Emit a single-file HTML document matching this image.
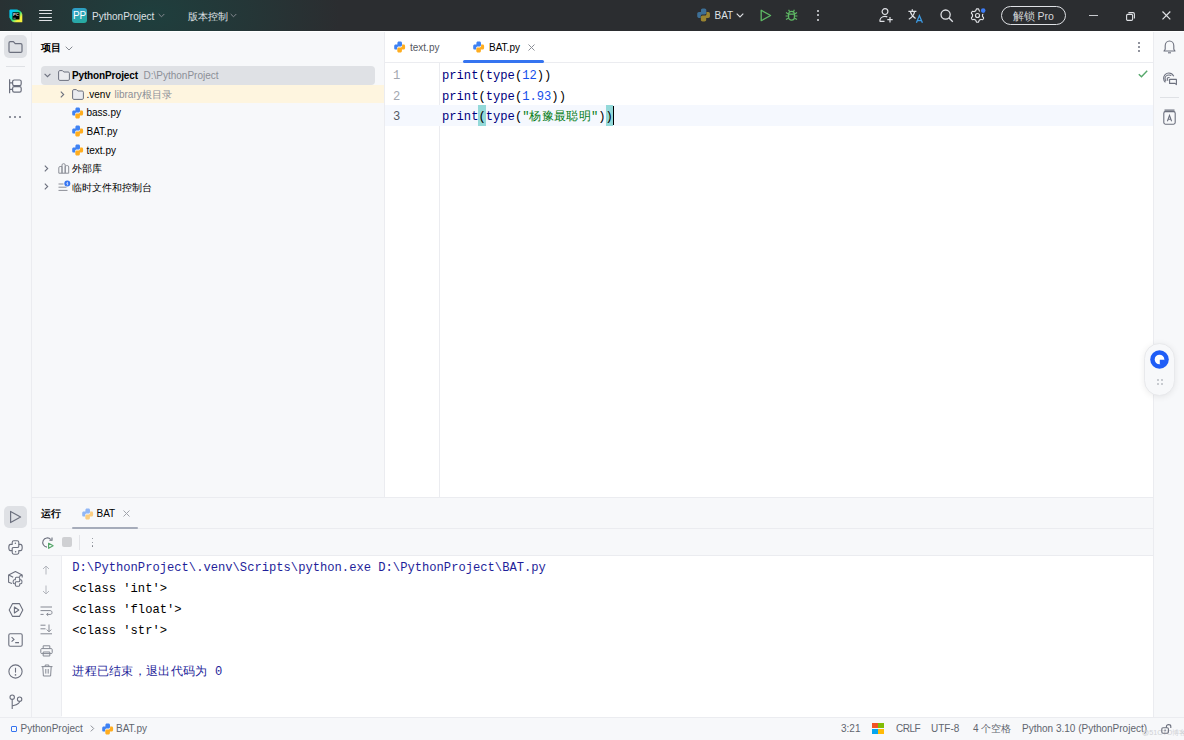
<!DOCTYPE html>
<html><head><meta charset="utf-8">
<style>
*{margin:0;padding:0;box-sizing:border-box}
html,body{width:1184px;height:740px;overflow:hidden;background:#f7f8fa;font-family:"Liberation Sans",sans-serif;color:#000}
.a{position:absolute}
.t{position:absolute;white-space:nowrap;font-size:10px;line-height:12px}
.m{font-family:"Liberation Mono",monospace;font-size:12.15px;line-height:14px;position:absolute;white-space:nowrap}
svg{position:absolute;overflow:visible}
#title{left:0;top:0;width:1184px;height:30.7px;background:#2b2d30}
#tgrad{left:0;top:0;width:600px;height:30.7px;background:radial-gradient(ellipse 190px 110px at 150px 15px,rgba(28,66,64,0.85),rgba(28,66,64,0.45) 50%,rgba(28,66,64,0) 100%)}
</style></head><body>
<svg width="0" height="0" style="position:absolute"><defs><g id="pyc"><path d="M4.9 0.4H6.5C7.4 0.4 8 1 8 1.9V4C8 4.9 7.4 5.5 6.5 5.5H4.6C3.8 5.5 3.2 6.1 3.2 6.9V8.5H1.6C0.7 8.5 0.2 7.8 0.2 6.9V5C0.2 4.1 0.8 3.5 1.7 3.5H3.4V1.9C3.4 1 4 0.4 4.9 0.4Z" fill="#3f82f3"/><path d="M4.9 0.4H6.5C7.4 0.4 8 1 8 1.9V4C8 4.9 7.4 5.5 6.5 5.5H4.6C3.8 5.5 3.2 6.1 3.2 6.9V8.5H1.6C0.7 8.5 0.2 7.8 0.2 6.9V5C0.2 4.1 0.8 3.5 1.7 3.5H3.4V1.9C3.4 1 4 0.4 4.9 0.4Z" fill="#ffad1f" transform="rotate(180 5.65 6)"/></g><g id="pym"><path d="M4.9 0.4H6.5C7.4 0.4 8 1 8 1.9V4C8 4.9 7.4 5.5 6.5 5.5H4.6C3.8 5.5 3.2 6.1 3.2 6.9V8.5H1.6C0.7 8.5 0.2 7.8 0.2 6.9V5C0.2 4.1 0.8 3.5 1.7 3.5H3.4V1.9C3.4 1 4 0.4 4.9 0.4Z" fill="#3d6f96"/><path d="M4.9 0.4H6.5C7.4 0.4 8 1 8 1.9V4C8 4.9 7.4 5.5 6.5 5.5H4.6C3.8 5.5 3.2 6.1 3.2 6.9V8.5H1.6C0.7 8.5 0.2 7.8 0.2 6.9V5C0.2 4.1 0.8 3.5 1.7 3.5H3.4V1.9C3.4 1 4 0.4 4.9 0.4Z" fill="#9a8430" transform="rotate(180 5.65 6)"/></g></defs></svg>
<!-- title bar -->
<div id="title" class="a"></div>
<div id="tgrad" class="a"></div>
<!-- logo -->
<svg style="left:8.5px;top:8.5px" width="14" height="14" viewBox="0 0 14 14"><defs><linearGradient id="lg" x1="0" y1="0" x2="1" y2="1"><stop offset="0.2" stop-color="#00c8f6"/><stop offset="0.5" stop-color="#14d98a"/><stop offset="0.75" stop-color="#f5f03c"/></linearGradient></defs><path d="M0.4 1.6Q0.4 0.4 1.6 0.4H8.2L10.8 1.8Q13 3 13.3 5.2V13.2H5Q2.8 13.1 1.8 10.8L0.4 8.4Z" fill="url(#lg)"/><rect x="3.5" y="3.3" width="7" height="7.2" fill="#000"/><text x="3.9" y="7.3" font-family="Liberation Sans" font-size="4.2" font-weight="bold" fill="#e8e8e8">PC</text><rect x="4.3" y="8.8" width="2.4" height="0.7" fill="#bbb"/></svg>
<!-- hamburger -->
<div class="a" style="left:39px;top:9.5px;width:13px;height:1.3px;background:#dfe1e5;border-radius:1px"></div>
<div class="a" style="left:39px;top:13px;width:13px;height:1.3px;background:#dfe1e5;border-radius:1px"></div>
<div class="a" style="left:39px;top:16.6px;width:13px;height:1.3px;background:#dfe1e5;border-radius:1px"></div>
<div class="a" style="left:39px;top:20px;width:13px;height:1.3px;background:#dfe1e5;border-radius:1px"></div>
<!-- PP -->
<div class="a" style="left:72px;top:8px;width:15px;height:15px;border-radius:3px;background:linear-gradient(160deg,#2f9ccc,#27ad9c)"></div>
<div class="t" style="left:72px;top:9.5px;width:15px;text-align:center;font-size:10px;line-height:12px;color:#fff;letter-spacing:-0.2px">PP</div>
<div class="t" style="left:92px;top:10.5px;color:#dfe1e5">PythonProject</div>
<svg style="left:158px;top:13px" width="7" height="5" viewBox="0 0 7 5"><path d="M0.7 1 L3.5 3.8 L6.3 1" fill="none" stroke="#868a91" stroke-width="1"/></svg>
<div class="t" style="left:187.5px;top:10.5px;color:#dfe1e5;font-size:9.6px">版本控制</div>
<svg style="left:230px;top:13px" width="7" height="5" viewBox="0 0 7 5"><path d="M0.7 1 L3.5 3.8 L6.3 1" fill="none" stroke="#868a91" stroke-width="1"/></svg>
<!-- run config -->
<svg style="left:697px;top:8.3px" width="14" height="14" viewBox="0 0 12 12"><use href="#pym"/></svg>
<div class="t" style="left:714.5px;top:10.3px;color:#dfe1e5">BAT</div>
<svg style="left:736px;top:13px" width="8" height="5" viewBox="0 0 8 5"><path d="M0.7 0.7 L4 4 L7.3 0.7" fill="none" stroke="#dfe1e5" stroke-width="1.1"/></svg>
<svg style="left:760px;top:9px" width="12" height="13" viewBox="0 0 12 13"><path d="M1.2 1.3 V11.7 L10.6 6.5 Z" fill="none" stroke="#5fb865" stroke-width="1.3" stroke-linejoin="round"/></svg>
<svg style="left:785px;top:9px" width="13" height="12" viewBox="0 0 13 12"><g fill="none" stroke="#5fb865" stroke-width="1.2"><path d="M3.6 5.2C3.6 3.6 4.9 2.4 6.5 2.4S9.4 3.6 9.4 5.2V8.2C9.4 9.9 8.1 11.2 6.5 11.2S3.6 9.9 3.6 8.2Z"/><path d="M4.6 2.8L3.6 0.8M8.4 2.8L9.4 0.8M0.6 7H3.6M9.4 7H12.4M1 3.6L3.6 5.2M12 3.6L9.4 5.2M1 10.6L3.6 9M12 10.6L9.4 9M3.6 5.2H9.4"/></g></svg>
<div class="a" style="left:816.8px;top:10.2px;width:1.8px;height:1.8px;border-radius:1px;background:#dfe1e5"></div>
<div class="a" style="left:816.8px;top:14.4px;width:1.8px;height:1.8px;border-radius:1px;background:#dfe1e5"></div>
<div class="a" style="left:816.8px;top:18.8px;width:1.8px;height:1.8px;border-radius:1px;background:#dfe1e5"></div>
<!-- right icons -->
<svg style="left:879px;top:8px" width="15" height="15" viewBox="0 0 15 15"><g fill="none" stroke="#dfe1e5" stroke-width="1.2"><circle cx="6" cy="3.6" r="2.9"/><path d="M0.8 13.4C0.8 10.8 2.8 8.4 6 8.4C6.9 8.4 7.7 8.6 8.3 8.9M0.8 13.4H5.5"/><path d="M11 9V14.4M8.3 11.7H13.7"/></g></svg>
<svg style="left:907.5px;top:8.5px" width="17" height="14" viewBox="0 0 17 14"><g fill="none" stroke="#dfe1e5" stroke-width="1.2"><path d="M4.3 0.3V2M0.4 2.4H8.4"/><path d="M6.6 2.4C6 5.8 4 8.6 0.8 10.2M2.2 2.4C3 5.2 4.6 7.6 7.6 9.6"/></g><g fill="none" stroke="#3d9be3" stroke-width="1.3"><path d="M8.4 13.8L11.4 6.6L14.4 13.8M9.4 11.6H13.4"/></g></svg>
<svg style="left:940px;top:9px" width="14" height="14" viewBox="0 0 14 14"><g fill="none" stroke="#dfe1e5" stroke-width="1.3"><circle cx="5.6" cy="5.6" r="4.6"/><path d="M9 9L12.8 12.8"/></g></svg>
<svg style="left:969.5px;top:8px" width="15" height="15" viewBox="0 0 15 15"><g fill="none" stroke="#dfe1e5" stroke-width="1.15" stroke-linejoin="round"><path d="M12.5 7.5L12.5 7.8L12.5 8.2L12.5 8.5L12.9 9.0L13.5 9.5L13.6 10.0L13.5 10.5L13.3 10.8L13.0 11.2L12.8 11.5L12.3 11.7L11.5 11.5L10.9 11.4L10.6 11.5L10.3 11.7L10.0 11.8L9.7 12.0L9.4 12.1L9.2 12.4L9.0 12.9L8.7 13.7L8.4 14.1L7.9 14.2L7.5 14.2L7.1 14.2L6.6 14.1L6.3 13.7L6.0 12.9L5.8 12.4L5.6 12.1L5.3 12.0L5.0 11.8L4.7 11.7L4.4 11.5L4.1 11.4L3.5 11.5L2.7 11.7L2.2 11.5L2.0 11.2L1.7 10.8L1.5 10.5L1.4 10.0L1.5 9.5L2.1 9.0L2.5 8.5L2.5 8.2L2.5 7.8L2.5 7.5L2.5 7.2L2.5 6.8L2.5 6.5L2.1 6.0L1.5 5.5L1.4 5.0L1.5 4.5L1.7 4.2L2.0 3.8L2.2 3.5L2.7 3.3L3.5 3.5L4.1 3.6L4.4 3.5L4.7 3.3L5.0 3.2L5.3 3.0L5.6 2.9L5.8 2.6L6.0 2.1L6.3 1.3L6.6 0.9L7.1 0.8L7.5 0.8L7.9 0.8L8.4 0.9L8.7 1.3L9.0 2.1L9.2 2.6L9.4 2.9L9.7 3.0L10.0 3.2L10.3 3.3L10.6 3.5L10.9 3.6L11.5 3.5L12.3 3.3L12.8 3.5L13.0 3.8L13.3 4.2L13.5 4.5L13.6 5.0L13.5 5.5L12.9 6.0L12.5 6.5L12.5 6.8L12.5 7.2Z"/><circle cx="7.5" cy="7.5" r="2"/></g><circle cx="13.2" cy="2.6" r="3.3" fill="#2b2d30"/><circle cx="13.2" cy="2.6" r="2.3" fill="#3d7cf5"/></svg>
<div class="a" style="left:1001px;top:5.5px;width:64.5px;height:19px;border:1.3px solid #dfe1e5;border-radius:10px"></div>
<div class="t" style="left:1012.5px;top:9.5px;font-size:10.5px;color:#d4d6da">解锁&nbsp;Pro</div>
<div class="a" style="left:1089.3px;top:14.8px;width:8.4px;height:1.3px;background:#c8cacf"></div>
<svg style="left:1125.5px;top:11.5px" width="9" height="9" viewBox="0 0 9 9"><g fill="none" stroke="#dfe1e5" stroke-width="1.1"><rect x="0.6" y="2.4" width="6" height="6" rx="1.2"/><path d="M2.4 0.6H7C7.8 0.6 8.4 1.2 8.4 2V6.6"/></g></svg>
<svg style="left:1161.8px;top:11.3px" width="9" height="9" viewBox="0 0 9 9"><path d="M0.5 0.5L8.3 8.3M8.3 0.5L0.5 8.3" stroke="#dfe1e5" stroke-width="1.2"/></svg>

<!-- left strip -->
<div class="a" style="left:0;top:30.7px;width:1184px;height:1.3px;background:#fff"></div>
<div class="a" style="left:31px;top:32px;width:1px;height:685px;background:#ebecf0"></div>
<!-- project panel -->
<div class="a" style="left:4px;top:35px;width:23px;height:23px;border-radius:5px;background:#dfe1e5"></div>
<svg style="left:8px;top:41px" width="15" height="12" viewBox="0 0 15 12"><path d="M1 2C1 1.2 1.4 0.6 2.2 0.6H5.4L7.2 2.6H12.6C13.4 2.6 14 3.2 14 4V10.2C14 11 13.4 11.4 12.6 11.4H2.2C1.4 11.4 1 11 1 10.2Z" fill="none" stroke="#6c707e" stroke-width="1.2" stroke-linejoin="round"/></svg>
<div class="a" style="left:6px;top:66px;width:19px;height:1px;background:#dfe1e5"></div>
<svg style="left:9px;top:79px" width="13" height="15" viewBox="0 0 13 15"><g fill="none" stroke="#6c707e" stroke-width="1.2"><path d="M0.6 0.3V14.3"/><rect x="3.6" y="1" width="8.6" height="5.6" rx="1.6"/><rect x="3.6" y="7.6" width="8.6" height="5.6" rx="1.6"/><path d="M0.6 3.8H3.6M0.6 10.4H3.6"/></g></svg>
<div class="a" style="left:9.2px;top:116.1px;width:2.2px;height:2.2px;border-radius:50%;background:#6c707e"></div>
<div class="a" style="left:14.2px;top:116.1px;width:2.2px;height:2.2px;border-radius:50%;background:#6c707e"></div>
<div class="a" style="left:19.2px;top:116.1px;width:2.2px;height:2.2px;border-radius:50%;background:#6c707e"></div>

<div class="t" style="left:41px;top:41.8px;font-weight:bold;color:#000;font-size:9.6px">项目</div>
<svg style="left:64.5px;top:46px" width="8" height="5" viewBox="0 0 8 5"><path d="M0.7 0.7L4 4L7.3 0.7" fill="none" stroke="#868a91" stroke-width="1"/></svg>

<div class="a" style="left:41px;top:66px;width:334px;height:18.7px;border-radius:4px;background:#dfe1e5"></div>
<div class="a" style="left:32px;top:84.7px;width:352px;height:18.4px;background:#fef5df"></div>
<!-- row 1 -->
<svg style="left:44px;top:72.5px" width="7" height="5" viewBox="0 0 7 5"><path d="M0.6 0.8L3.5 3.7L6.4 0.8" fill="none" stroke="#6c707e" stroke-width="1.1"/></svg>
<svg style="left:57.5px;top:69.5px" width="12" height="11" viewBox="0 0 12 11"><path d="M0.6 1.8C0.6 1.1 1.1 0.6 1.8 0.6H4.4L5.8 2H10.2C10.9 2 11.4 2.5 11.4 3.2V9.2C11.4 9.9 10.9 10.4 10.2 10.4H1.8C1.1 10.4 0.6 9.9 0.6 9.2Z" fill="#ebecf0" stroke="#6c707e" stroke-width="1" stroke-linejoin="round"/></svg>
<div class="t" style="left:72px;top:69.8px;font-weight:bold;letter-spacing:-0.15px">PythonProject</div>
<div class="t" style="left:143.5px;top:69.8px;color:#8c8f97">D:\PythonProject</div>
<!-- row 2 -->
<svg style="left:60px;top:90.5px" width="5" height="7" viewBox="0 0 5 7"><path d="M0.8 0.6L3.7 3.5L0.8 6.4" fill="none" stroke="#6c707e" stroke-width="1.1"/></svg>
<svg style="left:72px;top:88.6px" width="12" height="11" viewBox="0 0 12 11"><path d="M0.6 1.8C0.6 1.1 1.1 0.6 1.8 0.6H4.4L5.8 2H10.2C10.9 2 11.4 2.5 11.4 3.2V9.2C11.4 9.9 10.9 10.4 10.2 10.4H1.8C1.1 10.4 0.6 9.9 0.6 9.2Z" fill="#ebecf0" stroke="#6c707e" stroke-width="1" stroke-linejoin="round"/></svg>
<div class="t" style="left:86.5px;top:89.2px">.venv</div>
<div class="t" style="left:114.5px;top:89.2px;color:#8c8f97">library<span style="font-size:9.6px">根目录</span></div>
<!-- files -->
<svg style="left:72px;top:106.5px" width="12" height="12" viewBox="0 0 12 12"><use href="#pyc"/></svg>
<div class="t" style="left:86.5px;top:107.4px">bass.py</div>
<svg style="left:72px;top:125px" width="12" height="12" viewBox="0 0 12 12"><use href="#pyc"/></svg>
<div class="t" style="left:86.5px;top:126.2px">BAT.py</div>
<svg style="left:72px;top:143.5px" width="12" height="12" viewBox="0 0 12 12"><use href="#pyc"/></svg>
<div class="t" style="left:86.5px;top:144.5px">text.py</div>
<!-- ext libs -->
<svg style="left:44px;top:164.5px" width="5" height="7" viewBox="0 0 5 7"><path d="M0.8 0.6L3.7 3.5L0.8 6.4" fill="none" stroke="#6c707e" stroke-width="1.1"/></svg>
<svg style="left:57.5px;top:162.5px" width="12" height="11" viewBox="0 0 12 11"><g fill="none" stroke="#8c8f97" stroke-width="1"><path d="M0.8 10.2V4.8C0.8 4 1.3 3.5 2.1 3.5H4V10.2Z"/><path d="M4 10.2V2C4 1.2 4.5 0.7 5.3 0.7H5.9C6.7 0.7 7.2 1.2 7.2 2V10.2Z"/><path d="M7.2 10.2V3.9C7.2 3.1 7.7 2.6 8.5 2.6H9.4C10.2 2.6 10.7 3.1 10.7 3.9V10.2Z"/></g></svg>
<div class="t" style="left:72px;top:163px;font-size:9.6px">外部库</div>
<svg style="left:44px;top:183px" width="5" height="7" viewBox="0 0 5 7"><path d="M0.8 0.6L3.7 3.5L0.8 6.4" fill="none" stroke="#6c707e" stroke-width="1.1"/></svg>
<svg style="left:57.5px;top:179.5px" width="13" height="13" viewBox="0 0 13 13"><g fill="none" stroke="#8c8f97" stroke-width="1"><path d="M0.5 4H5.5M0.5 7.2H8.5M0.5 10.4H9.5"/></g><circle cx="9.3" cy="3.5" r="3" fill="#3574f0"/><path d="M9.6 1.9L8.8 3.8H10L9.2 5.4" stroke="#fff" stroke-width="0.7" fill="none"/></svg>
<div class="t" style="left:72px;top:181.5px;font-size:9.6px">临时文件和控制台</div>
<!-- editor -->
<div class="a" style="left:385px;top:30.7px;width:768px;height:466.3px;background:#fff"></div>
<div class="a" style="left:384px;top:32px;width:1px;height:465px;background:#ebecf0"></div>
<div class="a" style="left:385px;top:62px;width:768px;height:1px;background:#ebecf0"></div>
<div class="a" style="left:439px;top:63px;width:1px;height:434px;background:#ebecf0"></div>
<div class="a" style="left:385px;top:105px;width:768px;height:21px;background:#f5f8fe"></div>
<!-- tabs -->
<svg style="left:394.3px;top:40.9px" width="12" height="12" viewBox="0 0 12 12"><use href="#pyc"/></svg>
<div class="t" style="left:410px;top:41.5px;color:#55585f">text.py</div>
<svg style="left:472.8px;top:40.9px" width="12" height="12" viewBox="0 0 12 12"><use href="#pyc"/></svg>
<div class="t" style="left:489px;top:41.5px;color:#000">BAT.py</div>
<svg style="left:527.5px;top:43.5px" width="7" height="7" viewBox="0 0 7 7"><path d="M0.5 0.5L6.5 6.5M6.5 0.5L0.5 6.5" stroke="#8c8f97" stroke-width="1"/></svg>
<div class="a" style="left:463px;top:60px;width:80.5px;height:3px;border-radius:2px;background:#3574f0"></div>
<div class="a" style="left:1137.5px;top:42px;width:2px;height:2px;border-radius:1px;background:#6c707e"></div>
<div class="a" style="left:1137.5px;top:46px;width:2px;height:2px;border-radius:1px;background:#6c707e"></div>
<div class="a" style="left:1137.5px;top:50px;width:2px;height:2px;border-radius:1px;background:#6c707e"></div>
<svg style="left:1138px;top:69.5px" width="10" height="8" viewBox="0 0 10 8"><path d="M0.8 4.2L3.5 6.8L9.2 0.8" fill="none" stroke="#55a76a" stroke-width="1.4"/></svg>
<!-- line numbers -->
<div class="m" style="left:393px;top:68.5px;color:#a3a7b0">1</div>
<div class="m" style="left:393px;top:89.5px;color:#a3a7b0">2</div>
<div class="m" style="left:393px;top:109.8px;color:#545864">3</div>
<!-- code -->
<div class="m" style="left:442px;top:68.5px"><span style="color:#000080">print</span>(<span style="color:#000080">type</span>(<span style="color:#1750eb">12</span>))</div>
<div class="m" style="left:442px;top:89.5px"><span style="color:#000080">print</span>(<span style="color:#000080">type</span>(<span style="color:#1750eb">1.93</span>))</div>
<div class="a" id="hl1" style="left:478px;top:105px;width:7.6px;height:20.5px;background:#93d9d9"></div>
<div class="a" id="hl2" style="left:605.6px;top:105px;width:7px;height:20.5px;background:#93d9d9"></div>
<div class="a" style="left:612.5px;top:106px;width:1.5px;height:19px;background:#000"></div>
<div class="m" style="left:442px;top:109.8px"><span style="color:#000080">print</span>(<span style="color:#000080">type</span>(<span style="color:#067d17">"<span id="cjk" style="letter-spacing:0.3px">杨豫最聪明</span>"</span>)<span id="lp">)</span></div>
<!-- right strip -->
<div class="a" style="left:1153px;top:32px;width:1px;height:685px;background:#ebecf0"></div>
<svg style="left:1163px;top:40px" width="13" height="14" viewBox="0 0 13 14"><g fill="none" stroke="#6c707e" stroke-width="1.1"><path d="M1 11H12L10.8 9.3V5.8C10.8 3 8.9 1 6.5 1S2.2 3 2.2 5.8V9.3Z" stroke-linejoin="round"/><path d="M5 12.8H8"/></g></svg>
<svg style="left:1163px;top:71.5px" width="15" height="14" viewBox="0 0 15 14"><g fill="none" stroke="#6c707e" stroke-width="1.1"><path d="M8.3 3.6C7.6 3.2 6.8 3 6 3C3.8 3 2 4.6 2 6.6C2 7.6 2.4 8.4 3.1 9.1"/><path d="M10.8 4.2C9.8 2.4 7.9 1 5.8 1C2.9 1 0.6 3.4 0.6 6.3C0.6 7.9 1.3 9.3 2.4 10.3"/><path d="M6.6 5.6C5.4 5.2 4.2 6 4.2 7.1C4.2 7.8 4.6 8.3 5.2 8.6"/><path d="M6.6 7.4H13.4V12.6L12 11.4H6.6Z" stroke-linejoin="round"/></g></svg>
<div class="a" style="left:1160px;top:97px;width:19px;height:1px;background:#dfe1e5"></div>
<svg style="left:1163px;top:109px" width="13" height="16" viewBox="0 0 13 16"><g fill="none" stroke="#6c707e" stroke-width="1.1"><rect x="0.8" y="2.6" width="11.4" height="12.6" rx="1.6"/><path d="M1.5 1H11.5M1.5 2.4H11.5"/><path d="M4.4 12.2L6.5 6.4L8.6 12.2M5.1 10.3H7.9"/></g></svg>
<!-- floating widget -->
<div class="a" style="left:1143.5px;top:343.3px;width:31px;height:53.2px;border-radius:16px;background:#f7f8fa;border:1px solid #e8e9ec;box-shadow:0 1px 6px rgba(0,0,0,0.08)"></div>
<svg style="left:1150px;top:349.8px" width="19" height="19" viewBox="0 0 19 19"><circle cx="9.5" cy="9.5" r="9.3" fill="#1f5df6"/><circle cx="9.5" cy="9.5" r="4.8" fill="#fff"/><path d="M9.8 9.8H14.4V11.2C14.4 13 13 14.4 11.2 14.4H9.8Z" fill="#1f5df6"/></svg>
<div class="a" style="left:1157px;top:379px;width:2px;height:2px;background:#c8cbd0"></div>
<div class="a" style="left:1160.5px;top:379px;width:2px;height:2px;background:#c8cbd0"></div>
<div class="a" style="left:1157px;top:382.5px;width:2px;height:2px;background:#c8cbd0"></div>
<div class="a" style="left:1160.5px;top:382.5px;width:2px;height:2px;background:#c8cbd0"></div>
<!-- run panel -->
<div class="a" style="left:32px;top:497px;width:1121px;height:1px;background:#ebecf0"></div>
<div class="a" style="left:32px;top:528px;width:1121px;height:1px;background:#ebecf0"></div>
<div class="a" style="left:32px;top:555px;width:1121px;height:1px;background:#ebecf0"></div>
<div class="a" style="left:62px;top:556px;width:1091px;height:160.6px;background:#fff"></div>
<div class="a" style="left:61px;top:556px;width:1px;height:160px;background:#ebecf0"></div>
<div class="a" style="left:4px;top:505.5px;width:23px;height:22.5px;border-radius:5px;background:#dfe1e5"></div>
<svg style="left:9px;top:510px" width="13" height="14" viewBox="0 0 13 14"><path d="M1.6 1.4V12.6L11.6 7Z" fill="none" stroke="#6c707e" stroke-width="1.2" stroke-linejoin="round"/></svg>
<div class="t" style="left:40.5px;top:508.3px;font-weight:bold;font-size:9.6px">运行</div>
<svg style="left:81.5px;top:507.5px" width="12" height="12" viewBox="0 0 12 12" opacity="0.55"><use href="#pyc"/></svg>
<div class="t" style="left:96.5px;top:508px">BAT</div>
<svg style="left:123px;top:510px" width="7" height="7" viewBox="0 0 7 7"><path d="M0.5 0.5L6.5 6.5M6.5 0.5L0.5 6.5" stroke="#a0a3aa" stroke-width="1"/></svg>
<div class="a" style="left:72px;top:526.8px;width:66px;height:2.2px;border-radius:1px;background:#a6acba"></div>
<!-- run toolbar -->
<svg style="left:41.5px;top:536.5px" width="13" height="13" viewBox="0 0 13 13"><path d="M8.8 2.5A4.6 4.6 0 1 0 5 10.1" fill="none" stroke="#6c707e" stroke-width="1.1"/><path d="M10 0.6V3.2H7.4" fill="none" stroke="#6c707e" stroke-width="1.1"/><path d="M6.6 6.3V11.3L11.1 8.8Z" fill="#f7f8fa" stroke="#55a76a" stroke-width="1.2" stroke-linejoin="round"/></svg>
<div class="a" style="left:62.2px;top:537.4px;width:9.6px;height:9.6px;border-radius:2px;background:#cfd0d3"></div>
<div class="a" style="left:79px;top:534.5px;width:1px;height:15px;background:#e3e4e8"></div>
<div class="a" style="left:91.7px;top:537.6px;width:1.8px;height:1.8px;border-radius:50%;background:#7d818a"></div>
<div class="a" style="left:91.7px;top:541.5px;width:1.8px;height:1.8px;border-radius:50%;background:#7d818a"></div>
<div class="a" style="left:91.7px;top:545.4px;width:1.8px;height:1.8px;border-radius:50%;background:#7d818a"></div>
<!-- left strip bottom icons -->
<svg style="left:8px;top:540px" width="15" height="15" viewBox="0 0 15 15"><g fill="none" stroke="#6c707e" stroke-width="1.1" stroke-linejoin="round"><path d="M5.8 0.8H9.2C10.1 0.8 10.8 1.5 10.8 2.4V4.4H12.6C13.5 4.4 14.2 5.3 14.2 7.5C14.2 9.7 13.5 10.6 12.6 10.6H10.8V12.6C10.8 13.5 10.1 14.2 9.2 14.2H5.8C4.9 14.2 4.2 13.5 4.2 12.6V10.6H2.4C1.5 10.6 0.8 9.7 0.8 7.5C0.8 5.3 1.5 4.4 2.4 4.4H4.2V2.4C4.2 1.5 4.9 0.8 5.8 0.8Z"/><path d="M4.2 10.6V8.8C4.2 7.9 4.9 7.5 5.8 7.5H9.2C10.1 7.5 10.8 7.1 10.8 6.2V4.4"/></g><circle cx="7.4" cy="3.3" r="0.75" fill="#6c707e"/><circle cx="7.6" cy="11.7" r="0.75" fill="#6c707e"/></svg>
<svg style="left:8px;top:571px" width="15" height="16" viewBox="0 0 15 16"><g fill="none" stroke="#6c707e" stroke-width="1.1" stroke-linejoin="round"><path d="M4 12.6L0.6 11.2V4L7.4 0.6L14.2 4V6.4"/><path d="M0.8 4.1L5.2 6.3M14 4.1L11 5.6"/></g><g transform="translate(4.6 5.8) scale(0.66)"><g fill="none" stroke="#6c707e" stroke-width="1.6" stroke-linejoin="round"><path d="M5.8 0.8H9.2C10.1 0.8 10.8 1.5 10.8 2.4V4.4H12.6C13.5 4.4 14.2 5.3 14.2 7.5C14.2 9.7 13.5 10.6 12.6 10.6H10.8V12.6C10.8 13.5 10.1 14.2 9.2 14.2H5.8C4.9 14.2 4.2 13.5 4.2 12.6V10.6H2.4C1.5 10.6 0.8 9.7 0.8 7.5C0.8 5.3 1.5 4.4 2.4 4.4H4.2V2.4C4.2 1.5 4.9 0.8 5.8 0.8Z"/><path d="M4.2 10.6V8.8C4.2 7.9 4.9 7.5 5.8 7.5H9.2C10.1 7.5 10.8 7.1 10.8 6.2V4.4"/></g></g></svg>
<svg style="left:7.5px;top:601.5px" width="16" height="16" viewBox="0 0 16 16"><g fill="none" stroke="#6c707e" stroke-width="1.1" stroke-linejoin="round"><path d="M4.6 1.6H11.4L14.8 8L11.4 14.4H4.6L1.2 8Z"/><path d="M6.4 5V11L10.8 8Z"/></g></svg>
<svg style="left:8px;top:633px" width="15" height="14" viewBox="0 0 15 14"><g fill="none" stroke="#6c707e" stroke-width="1.1"><rect x="0.8" y="0.8" width="13.4" height="12.4" rx="1.4"/><path d="M3.6 4.2L6 6.4L3.6 8.6M7.2 9.6H11"/></g></svg>
<svg style="left:7.5px;top:663.5px" width="15" height="15" viewBox="0 0 15 15"><g fill="none" stroke="#6c707e" stroke-width="1.1"><circle cx="7.5" cy="7.5" r="6.6"/><path d="M7.5 3.8V8.6"/></g><circle cx="7.5" cy="10.9" r="0.8" fill="#6c707e"/></svg>
<svg style="left:8.5px;top:693.5px" width="14" height="16" viewBox="0 0 14 16"><g fill="none" stroke="#6c707e" stroke-width="1.1"><circle cx="3.2" cy="3.2" r="2.2"/><circle cx="10.6" cy="5.2" r="2.2"/><path d="M3.2 5.4V15M10.6 7.4C10.6 10 7.6 10.6 3.2 12"/></g></svg>
<!-- console gutter icons -->
<svg style="left:42px;top:564.5px" width="8" height="10" viewBox="0 0 8 10"><path d="M4 9.5V1M1 4L4 1L7 4" fill="none" stroke="#b4b7be" stroke-width="1"/></svg>
<svg style="left:42px;top:585px" width="8" height="10" viewBox="0 0 8 10"><path d="M4 0.5V9M1 6L4 9L7 6" fill="none" stroke="#b4b7be" stroke-width="1"/></svg>
<svg style="left:40px;top:605.5px" width="13" height="10" viewBox="0 0 13 10"><g fill="none" stroke="#858993" stroke-width="1"><path d="M0.5 1H12M0.5 4.6H10.2C11.4 4.6 12 5.4 12 6.6S11.4 8.4 10.2 8.4H6.8M0.5 8.4H3.6"/><path d="M8.2 7L6.6 8.4L8.2 9.8"/></g></svg>
<svg style="left:40px;top:624px" width="13" height="11" viewBox="0 0 13 11"><g fill="none" stroke="#858993" stroke-width="1"><path d="M0.5 1.2H5.5M0.5 4.8H5.5M0.5 9.8H12M9 0.5V7.6M6.8 5.6L9 7.8L11.2 5.6"/></g></svg>
<svg style="left:40px;top:644.5px" width="13" height="12" viewBox="0 0 13 12"><g fill="none" stroke="#858993" stroke-width="1"><path d="M3.2 3.6V0.8H9.8V3.6"/><rect x="0.8" y="3.6" width="11.4" height="5" rx="1"/><path d="M3.2 7V11H9.8V7Z"/></g></svg>
<svg style="left:40.5px;top:664px" width="12" height="13" viewBox="0 0 12 13"><g fill="none" stroke="#858993" stroke-width="1"><path d="M0.5 2.6H11.5M4.2 2.6V1H7.8V2.6M1.8 2.6L2.4 12H9.6L10.2 2.6M4.8 5V9.6M7.2 5V9.6"/></g></svg>
<!-- console text -->
<div class="m" style="left:72.3px;top:561px;color:#1f1f9a">D:\PythonProject\.venv\Scripts\python.exe D:\PythonProject\BAT.py</div>
<div class="m" style="left:72.3px;top:582px">&lt;class 'int'&gt;</div>
<div class="m" style="left:72.3px;top:602.5px">&lt;class 'float'&gt;</div>
<div class="m" style="left:72.3px;top:623.5px">&lt;class 'str'&gt;</div>
<div class="m" style="left:72.3px;top:665px;color:#1f1f9a"><span style="letter-spacing:0.3px">进程已结束，退出代码为</span> 0</div>
<!-- status bar -->
<div class="a" style="left:0;top:716.6px;width:1184px;height:1px;background:#ebecf0"></div>
<div class="a" style="left:11px;top:726px;width:6px;height:6px;border:1px solid #3574f0;border-radius:1px"></div>
<div class="t" style="left:20.5px;top:723px;color:#61656e">PythonProject</div>
<svg style="left:89.5px;top:725px" width="5" height="7" viewBox="0 0 5 7"><path d="M0.8 0.6L3.7 3.5L0.8 6.4" fill="none" stroke="#8c8f97" stroke-width="1"/></svg>
<svg style="left:101.5px;top:722.5px" width="12" height="12" viewBox="0 0 12 12"><use href="#pyc"/></svg>
<div class="t" style="left:116px;top:723px;color:#61656e">BAT.py</div>
<div class="t" style="left:841px;top:723px;color:#61656e">3:21</div>
<div class="a" style="left:872.3px;top:723px;width:5.4px;height:5.2px;background:#f35325"></div>
<div class="a" style="left:878.3px;top:723px;width:5.4px;height:5.2px;background:#81bc06"></div>
<div class="a" style="left:872.3px;top:728.6px;width:5.4px;height:5.2px;background:#05a6f0"></div>
<div class="a" style="left:878.3px;top:728.6px;width:5.4px;height:5.2px;background:#ffba08"></div>
<div class="t" style="left:896px;top:723px;color:#61656e;letter-spacing:-0.5px">CRLF</div>
<div class="t" style="left:931px;top:723px;color:#61656e">UTF-8</div>
<div class="t" style="left:973px;top:723px;color:#61656e">4 个空格</div>
<div class="t" style="left:1022px;top:723px;color:#61656e">Python 3.10 (PythonProject)</div>
<div class="t" style="left:1142px;top:728.5px;font-size:7.2px;line-height:8px;color:#cfd1d5">@51CTO博客</div>
<svg style="left:1160.5px;top:723.5px" width="11" height="10" viewBox="0 0 11 10"><g fill="none" stroke="#6c707e" stroke-width="1.1"><rect x="0.8" y="3.8" width="6.6" height="5.4" rx="1.2"/><path d="M5.4 3.8V2.4C5.4 1.3 6.2 0.6 7.6 0.6S9.8 1.3 9.8 2.4V4"/><path d="M4.1 5.6V7.2"/></g></svg>

</body></html>
